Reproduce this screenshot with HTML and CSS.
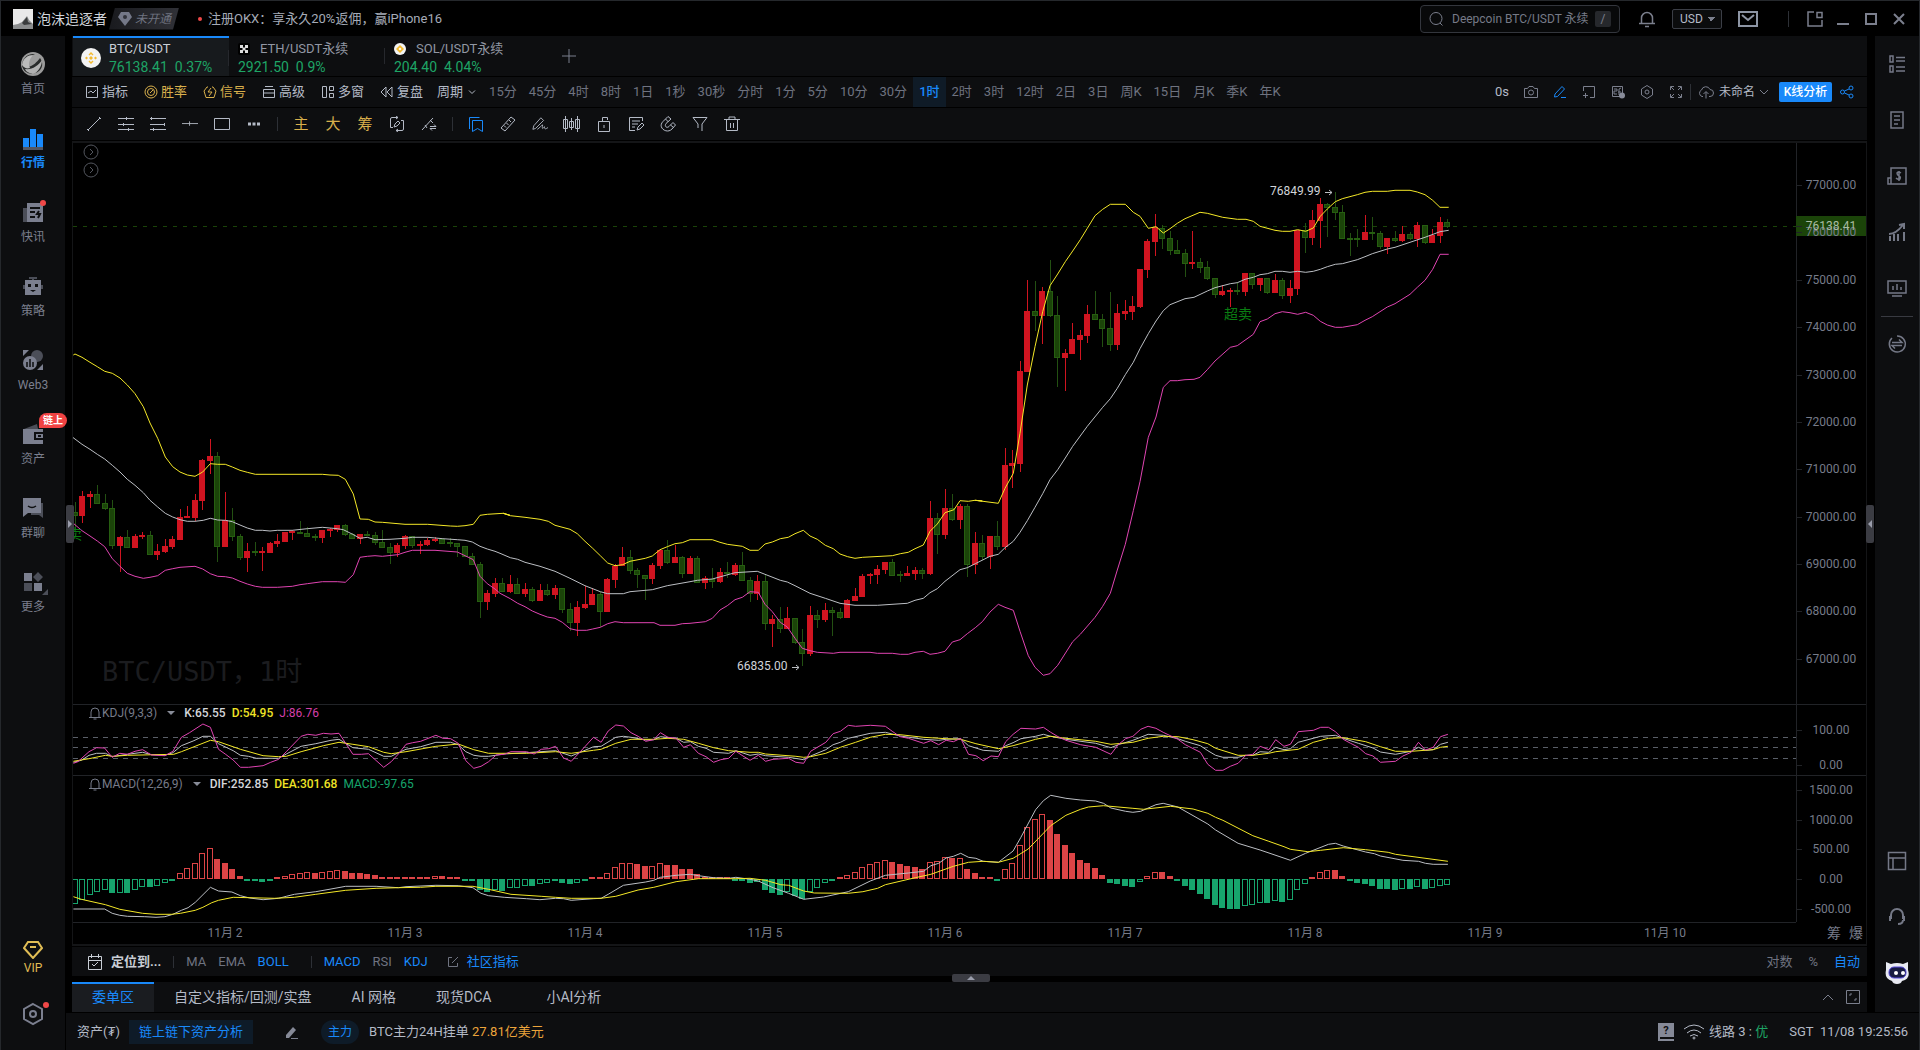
FILE: index.html
```html
<!DOCTYPE html>
<html lang="zh-CN">
<head>
  <meta charset="UTF-8" />
  <title>BTC/USDT</title>
  <link rel="stylesheet" href="styles.css">
</head>
<body>
  <header class="titlebar">
    <svg class="app-logo" viewBox="0 0 20 20"><rect width="20" height="20" fill="#e9e9e9"/><path d="M0 16l5-1 4-2 5-6 2 4 4 4v5H0z" fill="#8b8d8e"/><path d="M9 14l5-6 1 5 4 2-8 1z" fill="#3a3c3d"/></svg>
    <span class="app-name">泡沫追逐者</span>
    <span class="level"><svg width="16" height="16" viewBox="0 0 16 16"><path d="M4 1h8l3 5-7 9-7-9z" fill="#747888"/><circle cx="8" cy="6" r="2" fill="#30323a"/></svg><i>未开通</i></span>
    <a class="notice" href="#">注册OKX：享永久20%返佣，赢iPhone16</a>

    <div class="title-right">
      <label class="search">
        <svg width="16" height="16" viewBox="0 0 16 16"><circle cx="8" cy="7.500" r="6"/><path d="M12 12l2.500 2.500"/></svg>
        <input type="text" aria-label="搜索" placeholder="Deepcoin BTC/USDT 永续">
        <kbd>/</kbd>
      </label>
      <button class="icon-btn bell" aria-label="通知"><svg width="18" height="18" viewBox="0 0 18 18"><path d="M3.500 13V8a5.500 5.500 0 0 1 11 0v5M1 13.500h16M7 16.500h4" stroke-width="1.500"/></svg></button>
      <select class="currency" aria-label="计价货币"><option>USD</option></select>
      <button class="icon-btn mail" aria-label="消息"><svg width="20" height="16" viewBox="0 0 20 16"><path d="M1 1h18v14H1zM4 4l6 5 6-5" stroke-width="2"/></svg></button>
      <span class="sep"></span>
      <div class="window-btns">
        <button class="icon-btn" aria-label="分离"><svg width="16" height="16" viewBox="0 0 16 16"><path d="M7 1H1v14h14V9M10 1.500h5v5h-5z" stroke-width="1.500"/></svg></button>
        <button class="icon-btn" aria-label="最小化"><svg width="14" height="16" viewBox="0 0 14 16"><path d="M1 13h12" stroke-width="2"/></svg></button>
        <button class="icon-btn" aria-label="最大化"><svg width="14" height="14" viewBox="0 0 14 14"><path d="M2 2h10v10H2z" stroke-width="2"/></svg></button>
        <button class="icon-btn" aria-label="关闭"><svg width="14" height="14" viewBox="0 0 14 14"><path d="M2 2l10 10M12 2L2 12" stroke-width="2"/></svg></button>
      </div>
    </div>
  </header>

  <div class="layout">
    <nav class="side">
      <a href="#"><svg viewBox="0 0 24 24"><ellipse cx="12" cy="12" rx="12" ry="12" fill="#9b9b9b"/><path d="M1 14C1 7 6 1 14 2 8 4 5 9 7 15c5-1 9-5 12-9 4 5 2 11-1 13C12 24 3 22 1 14z" fill="#292b2b"/><path d="M1 13C2 6 7 3 12 3 8 8 7 12 9 16c-3 1-6 0-8-3z" fill="#bbb"/><path d="M4 17c7 1 13-3 17-9 0 7-5 13-9 14-4-1-7-2-8-5z" fill="#b2b2b2"/></svg>首页</a>
      <a href="#" class="active"><svg viewBox="0 0 24 24"><path d="M2 12h6v9H2zM9 3h6v18H9zM16 8h6v13h-6z" fill="#1989fa"/><path d="M2 21h20v3H2z" fill="#535763"/></svg>行情</a>
      <a href="#"><svg viewBox="0 0 24 24"><path d="M2 8h5v14H2z" fill="#4b4e58"/><path d="M6 3h16v19H6z" fill="#7b7f8f"/><path d="M9 8h10M9 12h5M9 17h5M18 11l-2 3h3l-2 4" stroke="#0e0f11" stroke-width="2" fill="none"/></svg><b class="dot"></b>快讯</a>
      <a href="#"><svg viewBox="0 0 24 24"><path d="M8 3h8v2H8zM11 4h2v3h-2zM2 11h20v4H2z" fill="#4b4e58"/><path d="M4 6h16v15H4z" fill="#7b7f8f"/><path d="M7 10h3v3H7zM14 10h3v3h-3zM9 16h6l-3 2z" fill="#0e0f11"/></svg>策略</a>
      <a href="#"><svg viewBox="0 0 24 24"><circle cx="16" cy="8" r="6" fill="#4b4e58"/><path d="M2 2h6L2 8zM22 22h-6l6-6z" fill="#7b7f8f"/><circle cx="9" cy="15" r="7" fill="#7b7f8f"/><path d="M6 14v5M9 11v8M12 14v5" stroke="#0e0f11" stroke-width="1.500"/></svg>Web3</a>
      <a href="#"><svg viewBox="0 0 24 24"><path d="M3 7l13-5 1 5z" fill="#4b4e58"/><path d="M2 7h20v15H2z" fill="#7b7f8f"/><path d="M22 11h-8v6h8M17 14h3" stroke="#0e0f11" stroke-width="2" fill="none"/></svg><em class="badge">链上</em>资产</a>
      <a href="#"><svg viewBox="0 0 24 24"><path d="M10 7h12v15l-4-3h-8z" fill="#4b4e58"/><path d="M2 2h18v15H7l-5 4z" fill="#7b7f8f"/><path d="M7 10q4 3 8 0" stroke="#0e0f11" stroke-width="1.500" fill="none"/></svg>群聊</a>
      <a href="#"><svg viewBox="0 0 24 24"><path d="M3 3h8v8H3zM13 13h8v8h-8z" fill="#7b7f8f"/><path d="M3 13h8v8H3zM17 2l5 5-5 5-5-5z" fill="#4b4e58"/></svg><b class="corner"></b>更多</a>
      <div class="side-bottom">
        <a href="#" class="vip"><svg viewBox="0 0 20 18"><path d="M5 1h10l4 6-9 10L1 7zM7 6h6" fill="none" stroke="#e0bd55" stroke-width="2"/></svg>VIP</a>
        <a href="#" class="gear" aria-label="设置"><svg viewBox="0 0 24 24"><path d="M12 2l9 5v10l-9 5-9-5V7z" fill="none" stroke="#7b7f8f" stroke-width="2"/><circle cx="12" cy="12" r="3" fill="none" stroke="#7b7f8f" stroke-width="2"/></svg><b class="dot"></b></a>
      </div>
    </nav>

    <div class="content">
      <div class="work">
        <main>
          <div class="symbols">
            <a href="#" class="symbol active">
              <svg width="20" height="20" viewBox="0 0 20 20"><circle cx="10" cy="10" r="10" fill="#f3f3f3"/><path d="M10 4l2.500 2.500-1 1L10 6 8.500 7.500l-1-1zM10 16l2.500-2.500-1-1L10 14l-1.500-1.500-1 1zM5.500 8.500L7 10l-1.500 1.500L4 10zM14.500 8.500L16 10l-1.500 1.500L13 10zM10 8l2 2-2 2-2-2z" fill="#f3ba2f"/></svg>
              <span><strong>BTC/USDT</strong><span class="price">76138.41&nbsp; 0.37%</span></span>
            </a>
            <a href="#" class="symbol">
              <span><strong><svg width="12" height="12" viewBox="0 0 12 12"><rect width="12" height="12" rx="2" fill="#000"/><path d="M2 2h3v3H2zM7 2h3v3H7zM2 7h3v3H2zM7 7h3v3H7zM4.500 4.500h3v3h-3z" fill="#ddd"/></svg>ETH/USDT永续</strong><span class="price">2921.50&nbsp; 0.9%</span></span>
            </a>
            <a href="#" class="symbol">
              <span><strong><svg width="12" height="12" viewBox="0 0 12 12"><circle cx="6" cy="6" r="6" fill="#f3f3f3"/><path d="M6 2l4 4-4 4-4-4z" fill="#f3ba2f"/><path d="M6 4.500L7.500 6 6 7.500 4.500 6z" fill="#fff"/></svg>SOL/USDT永续</strong><span class="price">204.40&nbsp; 4.04%</span></span>
            </a>
            <button class="icon-btn add" aria-label="添加"><svg width="14" height="14" viewBox="0 0 14 14"><path d="M7 0v14M0 7h14"/></svg></button>
          </div>

          <div class="toolbar">
            <div class="tools">
              <button><svg viewBox="0 0 14 14"><path d="M1.500 1.500h11v11h-11zM3 8l3-2 2 2 3-3"/></svg>指标</button>
              <button class="gold"><svg viewBox="0 0 14 14"><circle cx="7" cy="7" r="6"/><circle cx="7" cy="7" r="3.500"/><path d="M6 8l3-3"/></svg>胜率</button>
              <button class="gold"><svg viewBox="0 0 14 14"><path d="M5 2H4L1 6l2 6.500h8L13 6l-3-4H9M8 3L5 7h4l-3 4"/></svg>信号</button>
              <button><svg viewBox="0 0 14 14"><path d="M3 1.500h8M1.500 4.500h11v8h-11zM1.500 8h11"/></svg>高级</button>
              <button><svg viewBox="0 0 14 14"><path d="M1.500 1.500h4v11h-4zM8.500 1.500h4v4h-4zM8.500 8.500h4v4h-4z"/></svg>多窗</button>
              <button><svg viewBox="0 0 14 14"><path d="M6 2v10L1 7zM12 2v10L7 7z"/></svg>复盘</button>
            </div>
            <button class="period">周期<svg width="8" height="8" viewBox="0 0 8 8"><path d="M1 2.500l3 3 3-3"/></svg></button>
            <div class="times">
              <button>15分</button><button>45分</button><button>4时</button><button>8时</button><button>1日</button><button>1秒</button><button>30秒</button><button>分时</button><button>1分</button><button>5分</button><button>10分</button><button>30分</button><button class="active">1时</button><button>2时</button><button>3时</button><button>12时</button><button>2日</button><button>3日</button><button>周K</button><button>15日</button><button>月K</button><button>季K</button><button>年K</button>
            </div>
            <div class="toolbar-right">
              <span class="delay">0s</span>
              <button class="icon-btn" aria-label="截图"><svg viewBox="0 0 14 14"><path d="M.500 3.500h3L5 1.500h4l1.500 2h3v9H.500z"/><circle cx="7" cy="7.500" r="2.500"/></svg></button>
              <button class="icon-btn blue" aria-label="画笔"><svg viewBox="0 0 14 14"><path d="M1.500 12l.5-3 7-7.500 2.500 2.500-7 7.500zM8 12.500h5"/></svg></button>
              <button class="icon-btn" aria-label="选区"><svg viewBox="0 0 14 14"><path d="M1.500 6V1.500h11v11H8M3.500 8v5M1 10.500h5"/></svg></button>
              <button class="icon-btn" aria-label="弹幕"><svg viewBox="0 0 14 14"><path d="M1.500 1.500h10v10h-10zM3 4h3v2H3v3h3M8 4v6M7 7h3M8 4l2-1"/><circle cx="11" cy="10.500" r="3" fill="#888c9a"/></svg></button>
              <button class="icon-btn" aria-label="设置"><svg viewBox="0 0 14 14"><path d="M7 .500L12.500 4v6L7 13.500 1.500 10V4z"/><circle cx="7" cy="7" r="2"/></svg></button>
              <button class="icon-btn" aria-label="全屏"><svg viewBox="0 0 14 14"><path d="M1.500 5V1.500H5M9 1.500h3.500V5M12.500 9v3.500H9M5 12.500H1.500V9M2 2l3 3M12 2L9 5M12 12L9 9M2 12l3-3"/></svg></button>
              <span class="sep"></span>
              <button class="layout-name"><svg width="16" height="14" viewBox="0 0 16 14"><path d="M5 11.500H4A3.500 3.500 0 0 1 3.500 5 4.500 4.500 0 0 1 12 4.500a3.500 3.500 0 0 1 0 7h-1M8 13.500V7M5.500 9L8 6.500 10.500 9"/></svg>未命名<svg width="8" height="8" viewBox="0 0 8 8"><path d="M0 2l4 4 4-4"/></svg></button>
              <button class="primary">K线分析</button>
              <button class="icon-btn blue" aria-label="分享"><svg viewBox="0 0 14 14"><circle cx="2.500" cy="7" r="2"/><circle cx="11" cy="3" r="2"/><circle cx="11" cy="11" r="2"/><path d="M4.500 6L9 4M4.500 8L9 10"/></svg></button>
            </div>
          </div>

          <div class="drawbar">
            <button aria-label="线段"><svg viewBox="0 0 16 16"><path d="M2 14L14 2M1 13l2 2M13 1l2 2"/></svg></button>
            <button aria-label="平行线"><svg viewBox="0 0 16 16"><path d="M0 2.500h16M0 8.500h16M0 13.500h16M8.500 1v3M5.500 7v3M10.500 12v3"/></svg></button>
            <button aria-label="通道"><svg viewBox="0 0 16 16"><path d="M0 2.500h16M0 8.500h14M0 13.500h16M1.500 1v3M14.500 7v3M3.500 12v3"/></svg></button>
            <button aria-label="水平线"><svg viewBox="0 0 18 16"><path d="M0 7.500h18M8.500 5v5"/></svg></button>
            <button aria-label="矩形"><svg viewBox="0 0 16 16"><path d="M.500 2.500h15v11H.500z"/></svg></button>
            <button aria-label="更多"><svg viewBox="0 0 16 16"><path d="M2 8h3M6.500 8h3M11 8h3" stroke-width="3"/></svg></button>
            <span class="sep"></span>
            <button class="gold">主</button>
            <button class="gold">大</button>
            <button class="gold">筹</button>
            <button aria-label="自动画线"><svg viewBox="0 0 16 16"><path d="M9 1.500H3Q1.500 1.500 1.500 3v8.500H4M7 14.500h6q1.500 0 1.500-1.500V4.500H12M7 0l2 1.500L7 3M9 13l-2 1.500L9 16M5 11l1-3 3-3 2 2-3 3z"/></svg></button>
            <button aria-label="画线转换"><svg viewBox="0 0 16 16"><path d="M1 14L12 2M4 9l2 3M9 4l3 3M9 10.500h6l-2-2M15 12.500H9l2 2"/></svg></button>
            <span class="sep"></span>
            <button class="blue" aria-label="收藏"><svg viewBox="0 0 16 16"><path d="M1.500 13V1.500h10M4.500 4.500h10v11l-5-3-5 3z"/></svg></button>
            <button aria-label="测量"><svg viewBox="0 0 16 16"><path d="M1 12L11 1l4 3L5 15zM9 4l2 2M6.500 7l2 2M4 9.500l2 2"/></svg></button>
            <button aria-label="手绘"><svg viewBox="0 0 18 16"><path d="M1 14l1-4 8-9 3 3-9 9zM6 14c3-2 4-4 6-5-1 5 0 5 2 2 0 3 1 3 4 1"/></svg></button>
            <button class="wide" aria-label="K线形态"><svg viewBox="0 0 18 16"><path d="M2.500 0v16M.500 3.500h4v9h-4zM8.500 2v12M6.500 5.500h4v6h-4zM14.500 0v16M12.500 3.500h4v9h-4z"/></svg></button>
            <button aria-label="锁定"><svg viewBox="0 0 16 16"><path d="M2.500 5.500h11v10h-11zM6.500 5V1.500h5V4M8 9v3"/></svg></button>
            <button aria-label="笔记"><svg viewBox="0 0 16 16"><path d="M14.500 5V1.500h-13v13H7M4 5h8M4 8h6M4 11h3M9 14l1-3 4-4 2 2-4 4z"/></svg></button>
            <button aria-label="磁吸"><svg viewBox="0 0 16 16"><path d="M8 .5L3 5.500c-6 6 4 13 9 7.500l3.500-4-2.500-2.500-4 4c-2 2-5 0-3-3l5-4.500zM5.500 3l3 3M10.500 9l3 2.500"/></svg></button>
            <button aria-label="筛选"><svg viewBox="0 0 16 16"><path d="M1 1.500h14L10 8v7M1 1.500L6 8v4"/></svg></button>
            <button aria-label="删除"><svg viewBox="0 0 16 16"><path d="M0 3.500h16M5 3V1h6v2M2.500 4v10.500h11V4M6.500 7v5M9.500 7v5"/></svg></button>
          </div>

          <section class="chart">
            <svg id="plot" class="plot"></svg>
            <svg id="axis" class="axis"></svg>
            <svg id="timeline" class="timeline"></svg>
            <div class="axis-modes"><button>筹</button><button>爆</button></div>
            <div class="expanders">
              <button aria-label="展开一"><svg width="16" height="16" viewBox="0 0 16 16"><circle cx="8" cy="8" r="7"/><path d="M7 5l3 3-3 3"/></svg></button>
              <button aria-label="展开二"><svg width="16" height="16" viewBox="0 0 16 16"><circle cx="8" cy="8" r="7"/><path d="M7 5l3 3-3 3"/></svg></button>
            </div>
            <div class="legend kdj">
              <svg width="14" height="14" viewBox="0 0 14 14"><path d="M3 11V6a4 4 0 0 1 8 0v5M1 11.500h12M5.500 13h3"/></svg><span>KDJ(9,3,3)</span><b class="arrow"></b>
              <strong>K:65.55</strong><strong class="yellow">D:54.95</strong><span class="pink">J:86.76</span>
            </div>
            <div class="legend macd">
              <svg width="14" height="14" viewBox="0 0 14 14"><path d="M3 11V6a4 4 0 0 1 8 0v5M1 11.500h12M5.500 13h3"/></svg><span>MACD(12,26,9)</span><b class="arrow"></b>
              <strong>DIF:252.85</strong><strong class="yellow">DEA:301.68</strong><span class="green">MACD:-97.65</span>
            </div>
            <button class="handle left" aria-label="展开左栏"></button>
            <button class="handle right" aria-label="展开右栏"></button>
          </section>

          <div class="indicators">
            <button class="locate"><svg width="14" height="16" viewBox="0 0 14 16"><path d="M.500 2.500h13v13H.500zM.500 6.500h13M3.500 0v4M10.500 0v4M4 10l2 2 4-4"/></svg>定位到...</button>
            <span class="sep"></span>
            <button>MA</button><button>EMA</button><button class="blue">BOLL</button>
            <span class="sep wide"></span>
            <button class="blue">MACD</button><button>RSI</button><button class="blue">KDJ</button>
            <a href="#" class="community"><svg width="12" height="12" viewBox="0 0 12 12"><path d="M5 1.500H1.500v9h9V7M5 7l6-6"/></svg>社区指标</a>
            <div class="scale"><button>对数</button><button>%</button><button class="blue">自动</button></div>
            <button class="drag" aria-label="展开底栏"></button>
          </div>

          <div class="panels">
            <button class="active">委单区</button><button>自定义指标/回测/实盘</button><button>AI 网格</button><button>现货DCA</button><button class="last">小AI分析</button>
            <div class="panel-tools">
              <button class="icon-btn" aria-label="收起"><svg width="12" height="8" viewBox="0 0 12 8"><path d="M1 7l5-5 5 5"/></svg></button>
              <button class="icon-btn" aria-label="最大化面板"><svg width="14" height="14" viewBox="0 0 14 14"><path d="M.500.500h13v13H.500zM4 6V4h2M10 8v2H8"/></svg></button>
            </div>
          </div>
        </main>

        <aside class="rail">
          <a href="#" aria-label="自选"><svg viewBox="0 0 20 20"><path d="M3 2h3v6H3zM3 12h3v6H3zM9 3.500h9M9 7h9M9 13h9M9 17h9" stroke-width="1.500"/></svg></a>
          <a href="#" aria-label="资讯"><svg viewBox="0 0 20 20"><path d="M4 2h12v16H4zM7 6h6M7 10h6M7 14h4" stroke-width="1.500"/></svg></a>
          <a href="#" aria-label="交易"><svg viewBox="0 0 20 20"><path d="M4 2h15v16H4zM4 12H1v6h4M14 7q-3-2-4 0 0 2 2 3 2 1 1 3-2 1-4-1M12 5v10" stroke-width="1.500"/></svg></a>
          <a href="#" aria-label="数据"><svg viewBox="0 0 20 20"><path d="M3 14v5M7 12v7M11 12v7M17 10v9M2 12c6 0 10-4 14-9M12 3l5-1v5"/></svg></a>
          <a href="#" aria-label="看板"><svg viewBox="0 0 20 20"><path d="M1 3h18v12H1zM6 8v4M10 6v6M14 9v3M5 18h10" stroke-width="1.500"/></svg></a>
          <hr>
          <a href="#" aria-label="兑换"><svg viewBox="0 0 20 20"><path d="M5 4a8 8 0 1 0 5-2M5 8.500h10l-3-3M15 11.500H5l3 3" stroke-width="1.500"/></svg></a>
          <div class="rail-bottom">
            <a href="#" aria-label="布局"><svg viewBox="0 0 20 20"><path d="M1.500 1.500h17v17h-17zM2 7h17M6 7v12" stroke-width="1.500"/></svg></a>
            <a href="#" aria-label="客服"><svg viewBox="0 0 20 20"><path d="M4 12V8a6 6 0 0 1 12 0v4M3 9v5M17 9v5M16 13c0 3-2 4-5 4"/></svg></a>
            <a href="#" aria-label="助手"><svg viewBox="0 0 24 24"><path d="M1 1l5 2q6-2 12 0l5-2v8q3 9-6 11-1 3-5 3t-5-3Q-1 18 1 9z" fill="#e8eaf2"/><rect x="4" y="6" width="17" height="11" rx="5" fill="#171b42" stroke="#564bd8" stroke-width="1"/><circle cx="11" cy="12" r="2" fill="#fff"/><circle cx="18" cy="12" r="2" fill="#fff"/></svg></a>
          </div>
        </aside>
      </div>

      <footer class="status">
        <span>资产(₮)</span>
        <a href="#" class="chip">链上链下资产分析</a>
        <button class="icon-btn edit" aria-label="编辑"><svg width="14" height="16" viewBox="0 0 14 16"><path d="M1 11l7-8 3 3-7 8H1z" fill="#858997"/><path d="M6 14.500h7"/></svg></button>
        <span class="pill">主力</span>
        <span class="orders">BTC主力24H挂单 <b>27.81亿美元</b></span>
        <div class="status-right">
          <svg width="16" height="18" viewBox="0 0 16 18"><path d="M0 0h16v14H2v2h14v2H0z" fill="#858997"/><text x="8" y="11" text-anchor="middle" class="help">?</text></svg>
          <svg class="wifi" width="20" height="16" viewBox="0 0 20 16"><path d="M0 5q10-8 20 0M3 9q7-6 14 0M6 12q4-3 8 0"/><circle cx="10" cy="14" r="1"/></svg>
          <span>线路 3 : <b class="ok">优</b></span>
          <time>SGT&nbsp; 11/08 19:25:56</time>
        </div>
      </footer>
    </div>
  </div>

  <script src="script.js"></script>
</body>
</html>
```
FILE: styles.css
```css
* {
  box-sizing: border-box;
}

body {
  margin: 0;
  min-height: 100vh;
  display: flex;
  flex-direction: column;
  background: #000;
  border: 1px solid #25282c;
  border-width: 1px 1px 0;
  color: #b4bac6;
  font: 13px/18px Roboto, "Noto Sans CJK SC", sans-serif;
}

a {
  color: inherit;
  text-decoration: none;
}

button {
  padding: 0;
  border: 0;
  background: none;
  color: inherit;
  font: inherit;
  white-space: nowrap;
}

svg {
  flex-shrink: 0;
  fill: none;
  stroke: currentColor;
}

svg [fill]:not([stroke]) {
  stroke: none;
}

.icon-btn {
  display: flex;
  align-items: center;
  justify-content: center;
  color: #7b7f8d;
}

.blue,
.icon-btn.blue {
  color: #1989fa;
}

.gold {
  color: #d9b04c;
}

.sep {
  width: 1px;
  height: 16px;
  background: #2d3036;
}

/* title bar */
.titlebar {
  height: 35px;
  padding: 0 12px;
  display: flex;
  align-items: center;
}

.app-logo {
  width: 20px;
  height: 20px;
}

.app-name {
  margin-left: 4px;
  font-size: 14px;
  color: #d0d4da;
}

.level {
  width: 70px;
  height: 22px;
  margin-left: 2px;
  display: flex;
  align-items: center;
  gap: 2px;
  padding-left: 8px;
  background: linear-gradient(90deg, #191a1e, #303137);
  clip-path: polygon(6px 0, 100% 0, 64px 100%, 0 100%);
  color: #6f7380;
  font-size: 12px;
}

.notice {
  position: relative;
  margin-left: 29px;
  color: #a5abb7;
}

.notice::before {
  content: "";
  position: absolute;
  left: -10px;
  top: 7px;
  width: 4px;
  height: 4px;
  border-radius: 50%;
  background: #f04848;
}

.title-right {
  margin-left: auto;
  display: flex;
  align-items: center;
}

.search {
  width: 200px;
  height: 28px;
  padding: 0 7px;
  display: flex;
  align-items: center;
  gap: 8px;
  border: 1px solid #33363d;
  border-radius: 4px;
  background: #08090a;
  color: #7b7f8d;
}

.search input {
  width: 139px;
  padding: 0;
  border: 0;
  outline: 0;
  background: none;
  color: inherit;
  font: 12px/18px Roboto, "Noto Sans CJK SC", sans-serif;
}

.search input::placeholder {
  color: #767a87;
}

.search kbd {
  flex-shrink: 0;
  width: 16px;
  height: 16px;
  margin-left: -4px;
  border-radius: 2px;
  background: #26282c;
  text-align: center;
  font: 12px/16px Roboto, sans-serif;
}

.bell {
  margin: 0 16px 0 18px;
}

.currency {
  width: 50px;
  height: 20px;
  padding: 0 7px;
  appearance: none;
  border: 1px solid #3b3e46;
  border-radius: 2px;
  background-color: #0b0c0d;
  background-image: conic-gradient(from -45deg at 50% 100%, #7b7f8d 90deg, transparent 0);
  background-size: 8px 4px;
  background-position: 34px 7px;
  background-repeat: no-repeat;
  color: #b4bac6;
  font: 12px/16px Roboto, sans-serif;
}

.mail {
  margin: 0 30px 0 16px;
  color: #8d95a4;
}

.window-btns {
  display: flex;
  gap: 12px;
  margin-left: 18px;
}

.window-btns .icon-btn {
  width: 16px;
}

/* side nav */
.layout {
  flex: 1;
  display: flex;
}

.side {
  width: 64px;
  margin-right: 1px;
  padding: 16px 0 2px;
  display: flex;
  flex-direction: column;
  gap: 28px;
  background: #0d0e10;
}

.side a {
  position: relative;
  height: 46px;
  display: flex;
  flex-direction: column;
  align-items: center;
  gap: 4px;
  color: #7b7f8d;
  font-size: 12px;
}

.side svg {
  width: 24px;
  height: 24px;
}

.side a.active {
  color: #1989fa;
  font-weight: bold;
}

.dot {
  position: absolute;
  left: 39px;
  top: 0;
  width: 6px;
  height: 6px;
  border-radius: 50%;
  background: #f04848;
}

.gear .dot {
  left: 42px;
}

.corner {
  position: absolute;
  left: 41px;
  top: 19px;
  border: 3px solid #4b4e58;
  border-top-color: transparent;
  border-left-color: transparent;
}

.badge {
  position: absolute;
  left: 38px;
  top: -9px;
  z-index: 3;
  width: 28px;
  border-radius: 8px 8px 8px 0;
  background: #f04343;
  color: #fff;
  font: bold 10px/15px Roboto, "Noto Sans CJK SC", sans-serif;
  text-align: center;
}

.side-bottom {
  margin-top: auto;
}

.side .vip {
  gap: 0;
  height: 61px;
  color: #e0bd55;
}

.side .vip svg {
  width: 20px;
  height: 18px;
}

/* main column */
.content {
  flex: 1;
  min-width: 0;
  display: flex;
  flex-direction: column;
  gap: 1px;
}

.work {
  flex: 1;
  display: flex;
  gap: 8px;
  padding-left: 6px;
}

main {
  flex: 1;
  min-width: 0;
  display: flex;
  flex-direction: column;
  gap: 1px;
}

.symbols,
.toolbar,
.drawbar,
.indicators,
.panels {
  display: flex;
  align-items: center;
  background: #0d0e10;
}

.symbols {
  height: 40px;
  padding-left: 1px;
}

.symbol {
  position: relative;
  width: 156px;
  height: 40px;
  padding: 4px 0 0 9px;
  display: flex;
  align-items: center;
  gap: 8px;
  color: #9297a3;
}

.symbol::after {
  content: "";
  position: absolute;
  right: 0;
  top: 12px;
  width: 1px;
  height: 16px;
  background: #26282d;
}

.symbol:nth-child(3)::after {
  display: none;
}

.symbol.active {
  padding: 2px 0 0 8px;
  border-top: 2px solid #1989fa;
  background: #171a1d;
  color: #c9ced6;
}

.symbol strong {
  display: flex;
  align-items: center;
  gap: 10px;
  font-weight: normal;
}

.price {
  display: block;
  color: #1ea566;
  font-size: 14px;
}

.add {
  margin-left: 21px;
}

.toolbar {
  height: 30px;
  padding-left: 13px;
}

.tools {
  display: flex;
  gap: 16px;
}

.tools button {
  display: flex;
  align-items: center;
  gap: 3px;
}

.tools svg,
.toolbar-right .icon-btn svg {
  width: 14px;
  height: 14px;
}

.period {
  margin: 0 7px 0 14px;
  display: flex;
  align-items: center;
  gap: 5px;
}

.times {
  display: flex;
}

.times button {
  height: 30px;
  padding: 0 6px;
  color: #6f7380;
}

.times .active {
  background: #0f1b27;
  color: #1989fa;
  font-weight: 500;
}

.toolbar-right {
  margin-left: auto;
  padding-right: 13px;
  display: flex;
  align-items: center;
  gap: 15px;
}

.toolbar-right .sep {
  margin: 0 -8px;
}

.layout-name {
  display: flex;
  align-items: center;
  gap: 5px;
  font-size: 12px;
}

.layout-name svg {
  color: #7b7f8d;
}

.primary {
  width: 53px;
  height: 20px;
  margin-right: -7px;
  margin-left: -4px;
  border-radius: 2px;
  background: #1989fa;
  color: #fff;
  font-size: 12px;
  font-weight: 500;
}

.drawbar {
  height: 32px;
  padding-left: 6px;
}

.drawbar button {
  width: 32px;
  height: 32px;
  display: flex;
  align-items: center;
  justify-content: center;
}

.drawbar button svg {
  width: 16px;
  height: 16px;
}

.drawbar .wide svg {
  width: 18px;
}

.drawbar .gold {
  font-size: 15px;
}

.drawbar .sep {
  height: 14px;
  margin: 0 7px;
}

/* chart */
.chart {
  position: relative;
  flex: 1;
  display: grid;
  grid-template-columns: 1fr 70px;
  grid-template-rows: 779px 1fr;
  border: 1px solid #141517;
  border-width: 2px 1px;
}

.plot,
.axis,
.timeline {
  width: 100%;
  height: 100%;
  stroke: none;
  font-size: 12px;
}

.axis text,
.timeline text {
  fill: #767b89;
}

.timeline,
.axis-modes {
  height: 22px;
}

.axis-modes {
  display: flex;
  align-items: center;
  justify-content: flex-end;
  gap: 8px;
  padding-right: 3px;
  color: #767b89;
  font-size: 14px;
}

.grid-line {
  stroke: #212327;
}

.ref-line {
  stroke: #5a5f68;
  stroke-dasharray: 5 5;
}

.last-line {
  stroke: #1b4409;
  stroke-dasharray: 4 6;
}

.up {
  fill: #d01420;
}

.down {
  fill: #1b4409;
  stroke: #265e10;
}

.wick-up {
  stroke: #d01420;
}

.wick-down {
  stroke: #235012;
}

.line-upper {
  stroke: #f4e827;
}

.line-mid {
  stroke: #bcbfc4;
}

.line-lower {
  stroke: #e044b2;
}

.bar-up {
  fill: #dc4446;
  stroke: #dc4446;
}

.bar-down {
  fill: #17a56d;
  stroke: #17a56d;
}

.hollow {
  fill: #000;
}

.mark {
  fill: #d0d3d8;
}

.signal {
  fill: #0a7d12;
  font-size: 14px;
}

.watermark {
  fill: #1b1c1f;
  font: 27px "DejaVu Sans Mono", "Noto Sans CJK SC", monospace;
}

.axis .tag-text {
  fill: #a9bba2;
}

.expanders {
  position: absolute;
  left: 10px;
  top: 1px;
  display: flex;
  flex-direction: column;
  gap: 2px;
  color: #53565e;
}

.expanders button,
.expanders svg {
  display: block;
}

.legend {
  position: absolute;
  left: 15px;
  display: flex;
  align-items: center;
  color: #767b89;
  font-size: 12px;
}

.legend strong {
  margin-right: 6px;
  color: #d4d7db;
  font-weight: 500;
}

.legend .yellow {
  color: #efe326;
}

.legend .pink {
  color: #d43fa9;
}

.legend .green {
  color: #17a56d;
}

.kdj {
  top: 561px;
}

.macd {
  top: 632px;
}

.arrow {
  margin: 4px 9px 0 10px;
  border: 4px solid transparent;
  border-top-color: #888c98;
}

.handle {
  position: absolute;
  top: 362px;
  width: 8px;
  height: 38px;
  border-radius: 2px;
  background: #3b3c43;
}

.handle::after {
  content: "";
  position: absolute;
  top: 15px;
  border: 4px solid transparent;
}

.handle.left {
  left: -7px;
}

.handle.left::after {
  left: 2px;
  border-left-color: #9a9dab;
}

.handle.right {
  right: -8px;
}

.handle.right::after {
  right: 2px;
  border-right-color: #9a9dab;
}

/* bars under the chart */
.indicators {
  position: relative;
  height: 29px;
  margin-bottom: 5px;
  padding: 0 7px 0 16px;
  gap: 12px;
  color: #6f7380;
}

.locate {
  display: flex;
  align-items: center;
  gap: 9px;
  color: #c9ced6;
  font-weight: bold;
}

.indicators .sep {
  height: 12px;
}

.indicators .wide {
  margin-left: 10px;
}

.community {
  margin-left: 7px;
  display: flex;
  align-items: center;
  gap: 8px;
  color: #1989fa;
}

.community svg {
  color: #6f7380;
}

.scale {
  margin-left: auto;
  display: flex;
  gap: 16px;
}

.drag {
  position: absolute;
  left: 49%;
  bottom: -6px;
  width: 38px;
  height: 8px;
  border-radius: 2px;
  background: #3b3c43;
}

.drag::after {
  content: "";
  position: absolute;
  left: 15px;
  top: -2px;
  border: 4px solid transparent;
  border-bottom-color: #9a9dab;
}

.panels {
  height: 30px;
  font-size: 14px;
}

.panels > button {
  height: 30px;
  padding: 0 20px;
}

.panels > .active {
  padding-bottom: 2px;
  border-top: 2px solid #1989fa;
  background: #1a1c20;
  color: #1989fa;
}

.panels > .last {
  margin-left: 15px;
}

.panel-tools {
  margin-left: auto;
  padding-right: 7px;
  display: flex;
  gap: 12px;
}

/* right rail */
.rail {
  width: 44px;
  padding: 17px 0 28px;
  display: flex;
  flex-direction: column;
  align-items: center;
  gap: 34px;
  background: #0d0e10;
  color: #747886;
}

.rail a,
.rail svg {
  display: block;
  width: 22px;
  height: 22px;
}

.rail svg {
  width: 20px;
  height: 20px;
  margin: 1px;
  stroke-width: 2;
}

.rail hr {
  width: 32px;
  margin: -17px 0 -18px;
  border: 0;
  border-top: 1px solid #383a41;
}

.rail-bottom {
  margin-top: auto;
  display: flex;
  flex-direction: column;
  gap: 34px;
}

.rail-bottom a:last-child svg {
  width: 24px;
  height: 24px;
  margin: -1px;
}

/* status bar */
.status {
  height: 37px;
  padding: 0 11px;
  display: flex;
  align-items: center;
  background: #0d0e10;
}

.chip {
  margin-left: 9px;
  padding: 3px 10px;
  background: #0e1b28;
  color: #1989fa;
}

.edit {
  margin: 0 22px 0 32px;
}

.pill {
  margin-right: 10px;
  padding: 3px 7px;
  border-radius: 12px;
  background: #0e1b28;
  color: #1989fa;
  font-size: 12px;
}

.orders b {
  color: #eca43b;
  font-weight: normal;
}

.status-right {
  margin-left: auto;
  display: flex;
  align-items: center;
}

.help {
  fill: #0d0e10;
  stroke: none;
  font: bold 11px Roboto, sans-serif;
}

.wifi {
  margin: 0 5px 0 10px;
}

.ok {
  color: #1ea566;
  font-weight: normal;
}

.status time {
  margin-left: 21px;
}
```
FILE: script.js
```js
const NS = 'http://www.w3.org/2000/svg';
const plot = document.getElementById('plot');
const axis = document.getElementById('axis');
const timeline = document.getElementById('timeline');

function add(parent, tag, attrs, text) {
  const el = document.createElementNS(NS, tag);
  for (const key in attrs) el.setAttribute(key, attrs[key]);
  if (text) el.textContent = text;
  parent.appendChild(el);
}

// Candles: colour, high, body top, body bottom, low (1/3 px below the segment top)
const candles = [
  { top: 187, rows: 'G517,547,557,600 R483,498,558,580 R483,492,500,535 G466,492,521,521 G492,519,536,539 G509,534,647,656 R617,621,647,726 G600,621,653,653 R613,618,653,653 R606,615,620,627 G603,615,674,674 R642,663,674,690 R627,648,665,668 R619,627,651,656 R538,561,629,629 R528,558,563,563 R492,510,563,573 R388,390,513,540 R327,378,392,431 G366,378,650,695 R486,571,651,651 G534,570,620,634 G612,618,683,691 R639,663,683,727 G636,663,668,677 R652,663,668,723 R637,639,669,669 R613,633,641,650 R605,606,635,635 R600,602,608,629 G573,605,611,611 G590,609,620,622 G612,618,622,634 R599,600,623,639 R594,596,602,620 R585,586,599,605 G583,586,614,619 G609,613,626,627 R612,612,626,641 G603,612,617,617 G606,615,638,645 G601,636,653,654 G640,652,668,702 R639,645,668,682 R615,618,647,656 G618,618,647,654 R633,642,647,671 R624,629,645,647 R622,627,633,636 G624,626,641,641 G625,636,640,650 G639,640,650,681 G647,648,680,681 G670,678,704,705 G697,702,815,863 R780,789,815,841 R744,759,791,800 G745,759,785,786 R735,762,785,788 G743,762,791,792' },
  { top: 317, rows: 'R369,387,402,410 G380,387,422,426 R372,390,422,422 G371,390,404,408 R375,384,404,416 G383,384,449,458 G428,447,488,512 R423,441,488,527 R377,432,443,446 R384,402,434,434 G395,402,455,502 R355,357,455,455 R313,317,359,383 R261,291,317,317 G270,291,332,341 G324,330,346,384 G345,346,356,420 R308,315,357,373 R266,269,318,327 G240,270,308,311 R255,291,308,308 G287,291,341,354 R289,294,342,342 G287,294,368,369 R347,354,368,387 G323,356,365,384 R324,336,365,369 G306,336,342,353 R309,315,345,347 G275,315,362,362 G351,360,401,425 R346,363,401,420 G345,363,491,509 R464,477,491,561 G441,477,506,519 R440,474,506,507 G474,474,548,551 G508,546,581,619 R438,465,581,588 G451,465,479,504 R429,450,479,485 G441,450,458,527 G445,457,473,477 R418,420,473,473 R383,408,422,423 R341,348,410,410 R339,342,349,372 R315,327,345,372 R305,306,329,342 G297,306,347,347 G333,342,347,366 R318,339,347,347 R320,330,341,359 G324,331,341,356 R123,174,342,345 G160,174,224,281 R87,144,224,236 G102,144,179,184 R132,138,179,207 G132,138,314,350 R217,249,314,342 G225,249,290,300 R227,228,290,327 G184,228,260,270' },
  { top: 27, rows: 'R833,885,1130,1139 R839,879,887,953 R573,603,881,905 R329,423,605,606 G333,424,437,484 R351,363,437,522 G271,363,437,442 G378,435,563,652 R538,549,563,662 R460,507,551,551 R480,495,510,570 R404,432,497,519 G363,432,449,449 G433,447,476,530 G367,474,524,544 R401,429,524,540 R390,423,431,450 R377,408,426,449 R297,297,410,413 R208,213,299,324 R131,170,215,257 G165,174,206,236 G183,204,242,255 G210,240,251,251 G237,249,281,321 R184,276,281,296 G264,276,293,308 G273,291,326,329 G324,324,374,383 R345,363,375,377 R354,360,365,410 G337,360,365,375 R308,309,365,377 G309,309,344,356 R323,324,344,362 G324,324,368,373 R312,330,368,369 G324,330,377,386 R330,354,377,399 R180,180,356,375 G160,180,203,249 R121,150,203,224 R84,102,153,234 G98,102,113,200 G67,111,128,150 G106,126,206,206 G189,204,209,259 G176,204,209,230 R136,186,209,209 G141,186,191,210 G183,189,230,236 R203,204,231,251 G183,204,212,215 R168,192,212,215 G186,192,207,210 R156,165,207,231 G165,165,218,221 R178,194,218,218 R141,156,198,218 G147,156,170,173' }
];

const macd = [-76,-64,-48,-39,-33,-43,-42,-43,-34,-25,-25,-22,-13,-4,18,33,48,78,93,60,48,30,9,-4,-7,-10,-4,4,9,14,18,20,19,20,23,26,24,18,18,15,12,5,3,3,5,5,5,5,9,8,5,5,-4,-7,-32,-38,-34,-37,-28,-27,-22,-22,-16,-13,-4,-11,-16,-13,-7,4,5,18,36,48,49,45,39,40,48,42,42,30,30,15,5,3,3,3,-3,-5,-13,-9,-32,-41,-47,-40,-52,-60,-38,-28,-13,-4,4,12,21,36,45,51,57,51,45,39,36,30,51,54,66,63,64,30,18,6,6,-7,30,48,102,156,180,195,177,135,102,78,57,48,33,12,-13,-16,-22,-25,-10,9,21,21,9,-4,-22,-34,-46,-61,-79,-88,-91,-91,-82,-79,-73,-73,-67,-70,-64,-34,-16,5,21,27,27,9,-4,-13,-16,-22,-31,-31,-34,-31,-31,-25,-31,-28,-22,-18];

// Line segments: [left, top, horizontal scale, points]
const lines = {
  'line-upper': [
    [-13, 187, 3, '40,75 45,72 66,82 90,97 112,110 134,124 157,130 180,144 202,165 225,191 250,230 270,279 293,325 316,381 338,410 360,426 382,435 405,439 428,426 451,401 473,403 496,403 517,411 540,421 562,427 586,433 787,433 810,435 835,436 856,448 880,492 900,567 925,568 945,576 967,577 1035,583 1103,583 1171,588 1192,589 1215,587 1240,583 1260,556 1282,553 1330,550 1350,556'],
    [427, 317, 3, '10,160 31,167 75,172 120,178 145,184 165,196 210,208 232,221 255,244 278,265 301,287 323,309 345,317 368,314 390,304 436,295 457,288 480,269 502,260 525,251 547,248 570,239 637,239 660,247 682,253 727,259 750,271 775,271 795,252 817,246 841,236 865,232 885,221 910,211 930,228 952,238 976,256 1000,266 1020,282 1043,290 1065,295 1088,292 1177,287 1201,281 1225,277 1245,266 1270,255 1290,214 1312,192 1335,158 1362,149 1380,122 1405,124 1425,121 1447,123'],
    [887, 27, 3, '46,991 115,1000 135,955 160,910 180,790 202,645 225,530 248,425 270,347 293,312 316,275 338,243 361,209 382,175 405,137 428,118 451,103 496,103 520,127 540,139 565,175 588,170 610,189 630,176 652,160 675,146 720,127 742,130 788,142 832,148 858,148 880,154 900,169 945,181 967,184 990,184 1013,179 1037,184 1060,174 1081,139 1102,117 1126,95 1147,86 1192,74 1215,67 1237,64 1282,64 1305,61 1350,61 1372,66 1395,74 1418,91 1440,112 1466,112']
  ],
  'line-mid': [
    [-13, 187, 3, '38,322 66,343 90,358 112,373 134,387 157,406 180,426 202,448 225,466 250,488 270,511 293,531 316,550 338,561 360,569 382,574 405,574 430,571 451,565 473,570 496,571 517,575 540,585 562,594 586,601 607,601 630,603 652,601 697,601 742,596 787,592 832,596 850,599 878,613 900,625 922,622 945,629 990,628 1035,625 1057,622 1103,622 1148,626 1192,629 1215,631 1237,636 1260,649 1282,657 1305,664'],
    [427, 317, 3, '0,280 31,293 53,298 75,307 120,319 165,334 210,355 255,377 301,395 323,401 370,401 390,395 457,389 502,377 570,365 592,361 637,357 705,338 772,334 795,343 841,361 862,366 885,377 930,400 976,415 1020,430 1065,436 1132,436 1222,430 1245,421 1270,415 1290,398 1312,386 1335,364 1362,343'],
    [887, 27, 3, '0,1199 22,1193 46,1181 90,1159 115,1153 135,1133 160,1114 180,1087 202,1052 225,1012 248,971 270,929 293,899 316,864 338,829 382,769 428,712 451,686 472,655 496,614 520,577 540,536 565,491 588,453 610,422 630,404 675,386 702,382 742,363 765,353 811,341 832,338 855,328 880,322 900,314 922,311 945,304 967,304 990,307 1013,304 1037,307 1060,304 1081,298 1102,290 1126,283 1147,281 1192,269 1215,260 1237,251 1282,237 1305,232 1350,217 1395,202 1440,185 1466,181']
  ],
  'line-lower': [
    [-13, 187, 3, '40,580 66,602 90,618 112,633 134,650 157,686 179,708 202,730 225,739 250,745 270,742 293,737 316,721 338,716 360,712 405,709 428,717 451,731 473,739 496,740 517,744 540,754 562,762 586,769 607,772 652,772 697,769 720,764 742,761 787,755 832,755 856,757 880,734 900,682 922,679 945,677 967,679 1013,674 1035,667 1057,661 1125,661 1192,666 1215,677 1240,689 1260,739 1282,761 1305,777'],
    [427, 317, 3, '0,400 31,416 53,430 75,440 97,453 120,463 142,471 165,475 187,487 210,506 232,511 260,511 278,507 301,502 323,491 345,485 370,488 462,488 480,496 525,496 547,491 570,490 616,485 637,475 660,450 682,437 705,419 727,412 750,395 775,397 795,433 817,455 841,487 862,501 885,535 907,565 930,572 952,577 1000,580 1020,577 1110,577 1132,580 1177,580 1201,583 1225,583 1245,577 1270,574 1290,583 1312,580 1335,574 1357,546'],
    [887, 27, 3, '0,1409 22,1391 46,1373 67,1355 90,1326 115,1303 135,1312 160,1321 180,1384 205,1457 225,1492 250,1516 270,1511 293,1486 338,1415 361,1393 405,1342 428,1309 451,1270 472,1200 496,1123 520,1022 540,935 565,802 588,741 610,652 630,632 652,632 675,629 702,628 720,622 742,599 765,573 811,532 832,527 880,493 900,455 922,447 945,431 967,425 990,428 1013,433 1037,427 1060,436 1081,454 1102,465 1126,472 1147,472 1192,464 1215,451 1237,440 1260,425 1282,411 1305,401 1350,373 1372,352 1395,331 1418,298 1440,253 1466,253']
  ]
};

const oscillators = [
  ['line-mid', // K
    [-13, 557, 2.24, '30,187 48,181 65,166 82,160 102,160 117,170 151,163 185,157 205,164 235,166 253,158 272,137 300,122 320,109 337,109 355,131 388,152 404,166 422,169 440,175 490,175 507,162 540,139 573,131 607,121 625,118 656,143 691,148 725,169 742,169 758,158 775,148 808,140 842,127 875,127 892,134 909,155 927,166 943,169 960,169 995,162 1045,158 1110,152 1145,168 1160,160 1195,140 1212,139 1245,112 1262,109 1279,112 1312,120 1330,119 1345,110 1380,115 1397,127 1412,125 1430,139 1447,145 1464,157 1498,160 1514,152'],
    [677, 557, 2.178, '0,166 18,162 34,167 84,172 117,179 132,168 165,149 181,134 197,127 214,115 262,100 295,97 327,108 378,118 411,121 427,118 459,116 476,137 508,151 541,154 557,137 573,128 590,116 622,109 639,103 655,109 688,118 753,130 786,143 802,134 834,121 867,103 900,106 932,116 948,124 981,137 997,152 1014,166 1030,172 1063,172 1079,166 1095,166 1111,155 1130,157 1145,142 1163,149 1177,146 1194,127 1243,109 1275,106 1292,115 1325,130 1357,144 1373,156 1406,163 1440,154 1456,142 1471,151 1488,149 1504,133 1520,127']],
  ['line-upper', // D
    [-13, 557, 2.24, '30,184 65,176 102,166 117,169 151,166 255,163 272,155 337,121 355,125 404,148 455,167 490,170 507,169 540,155 590,137 625,127 656,133 691,140 725,157 742,161 775,155 842,139 892,132 927,149 960,160 1045,160 1110,155 1145,160 1195,151 1212,148 1245,130 1279,118 1330,118 1362,115 1397,118 1430,130 1464,143 1498,152'],
    [677, 557, 2.178, '0,157 18,157 34,162 100,169 117,172 132,170 165,160 197,142 230,127 262,112 295,103 327,104 378,112 427,116 459,118 492,131 541,146 573,137 622,118 655,109 688,115 753,124 786,133 834,127 867,115 900,109 932,110 965,119 997,131 1014,145 1063,166 1095,166 1130,160 1145,155 1194,148 1227,127 1260,115 1292,113 1341,125 1373,140 1406,154 1440,154 1488,149 1504,142 1520,139']],
  ['line-lower', // J
    [-13, 557, 2.24, '30,190 40,185 65,155 82,143 100,144 117,172 134,160 151,163 168,154 185,149 205,165 235,167 253,154 272,112 290,98 320,72 337,82 355,148 370,162 388,180 404,202 422,202 455,197 472,187 490,178 507,155 540,109 555,103 573,106 590,100 607,102 625,100 640,130 656,163 675,163 691,161 725,202 742,185 758,162 775,133 790,128 808,124 842,106 858,115 875,116 892,130 909,182 927,205 943,199 960,185 977,165 995,163 1010,155 1045,155 1062,162 1078,148 1095,146 1110,139 1128,174 1145,184 1160,163 1195,112 1212,127 1228,93 1245,75 1262,78 1279,98 1295,109 1312,124 1330,119 1345,98 1362,112 1380,115 1397,142 1412,134 1430,160 1447,170 1464,187 1480,179 1498,175 1514,154 1530,168'],
    [677, 557, 2.178, '0,181 18,166 34,184 50,178 84,175 100,187 117,190 132,154 165,127 181,101 197,94 214,76 230,79 262,76 295,79 311,95 327,110 345,115 378,130 394,122 411,134 427,121 443,125 459,115 476,163 492,167 508,182 525,168 541,170 557,125 573,103 590,85 622,87 639,82 655,97 671,110 688,121 720,134 753,142 786,163 802,134 818,116 834,109 851,88 867,79 884,85 900,97 932,118 948,134 981,157 997,193 1014,211 1030,211 1046,199 1063,190 1079,167 1095,163 1111,139 1130,149 1145,119 1163,139 1177,133 1194,95 1227,91 1243,82 1260,82 1275,95 1292,118 1308,130 1325,142 1341,161 1357,168 1373,187 1406,184 1422,168 1440,157 1456,127 1471,150 1488,142 1504,110 1520,103']],
  ['line-mid', // DIF
    [-13, 557, 2.24, '30,627 100,627 117,640 134,646 151,649 190,650 215,652 235,650 253,643 272,631 287,623 303,607 337,562 355,573 385,576 404,587 425,594 455,599 490,595 507,589 525,583 573,575 607,567 640,559 708,559 758,563 775,560 842,556 892,557 925,563 943,580 960,587 995,592 1045,596 1075,599 1110,595 1128,596 1145,601 1195,596 1212,595 1228,583 1262,556 1312,546 1330,541 1345,532 1380,526 1412,523 1430,527 1464,533 1498,535 1514,532'],
    [677, 557, 2.178, '0,538 18,543 50,563 84,580 117,598 160,591 214,575 262,543 295,526 345,519 378,514 394,497 411,490 427,474 443,469 459,460 476,472 492,475 508,484 541,487 573,453 590,412 622,329 639,302 655,286 688,295 720,300 753,303 770,310 786,324 818,334 834,337 851,334 884,314 900,310 932,321 997,372 1014,390 1063,430 1111,450 1177,481 1210,460 1260,433 1275,430 1292,438 1341,456 1360,461 1373,468 1422,481 1456,484 1471,490 1488,493 1520,493']],
  ['line-upper', // DEA
    [-13, 557, 2.24, '30,590 48,598 102,614 134,628 185,640 215,643 250,643 270,640 303,631 320,622 340,608 355,601 388,592 480,595 525,592 573,583 640,571 708,565 758,563 808,562 842,559 925,559 960,568 1010,583 1078,589 1110,592 1145,595 1212,595 1245,589 1295,570 1330,562 1380,545 1430,536 1514,536'],
    [677, 557, 2.178, '0,535 34,541 67,554 84,556 117,573 140,579 214,580 246,575 278,565 295,554 360,533 394,523 443,499 476,487 508,484 541,487 573,475 606,447 655,377 688,346 720,328 737,321 770,317 834,325 857,328 916,319 965,327 997,340 1014,352 1030,361 1095,407 1130,424 1163,440 1177,448 1215,455 1243,451 1292,443 1341,449 1390,457 1406,463 1520,484']]
];

function drawLine(name, segments) {
  const points = segments.map(([left, top, scale, data]) => data.split(' ').map(p => {
    const [x, y] = p.split(',');
    return (left + x / scale).toFixed(1) + ',' + (top + y / 3).toFixed(1);
  }).join(' ')).join(' ');
  add(plot, 'polyline', { class: name, points });
}

function hline(parent, y, name, x1 = 0, x2 = '100%') {
  add(parent, 'line', { class: name, x1, x2, y1: y + 0.5, y2: y + 0.5 });
}

// Panes
[561, 632].forEach(y => {
  hline(plot, y, 'grid-line');
  hline(axis, y, 'grid-line');
});
[594, 604, 615].forEach(y => hline(plot, y, 'ref-line'));
hline(plot, 83, 'last-line');
add(plot, 'text', { class: 'watermark', x: 29, y: 538 }, 'BTC/USDT，1时');

// Candlesticks
let index = 0;
candles.forEach(({ top, rows }) => rows.split(' ').forEach(row => {
  const up = row[0] === 'R';
  const [high, bodyTop, bodyBottom, low] = row.slice(1).split(',').map(v => Math.round(top + v / 3));
  const x = Math.floor(2 + 7.5 * index++);
  const height = Math.max(2, bodyBottom - bodyTop);
  add(plot, 'line', { class: up ? 'wick-up' : 'wick-down', x1: x + 0.5, x2: x + 0.5, y1: high, y2: low });
  if (up) {
    add(plot, 'rect', { class: 'up', x: x - 3, y: bodyTop, width: 6, height });
  } else {
    add(plot, 'rect', { class: 'down', x: x - 2.5, y: bodyTop + 0.5, width: 5, height: height - 1 });
  }
}));

// MACD histogram, hollow while the value is rising
macd.forEach((value, i) => {
  const x = Math.floor(2 + 7.5 * i);
  const height = Math.max(1, Math.round(Math.abs(value) / 3) - 1);
  const hollow = i > 0 && value > macd[i - 1] && height > 1;
  add(plot, 'rect', {
    class: (value > 0 ? 'bar-up' : 'bar-down') + (hollow || i === 0 ? ' hollow' : ''),
    x: x - 2.5, y: value > 0 ? 735.5 - height : 736.5, width: 5, height
  });
});

for (const name in lines) drawLine(name, lines[name]);
oscillators.forEach(([name, ...segments]) => drawLine(name, segments));

// Marks
add(plot, 'text', { class: 'mark', x: 1197, y: 52 }, '76849.99');
add(plot, 'path', { class: 'line-mid', d: 'M1252 49.5h7m-3-2.500l3 2.500-3 2.500' });
add(plot, 'text', { class: 'mark', x: 664, y: 527 }, '66835.00');
add(plot, 'path', { class: 'line-mid', d: 'M719 524.5h7m-3-2.500l3 2.500-3 2.500' });
add(plot, 'text', { class: 'signal', x: 1151, y: 176 }, '超卖');
add(plot, 'text', { class: 'signal', x: -19, y: 396 }, '超卖');

// Price axis
function tick(y, label, name = '') {
  hline(axis, y, 'grid-line', 0, 6);
  add(axis, 'text', { x: 35, y: y + 4, 'text-anchor': 'middle', class: name }, label);
}

add(axis, 'line', { class: 'grid-line', x1: 0.5, x2: 0.5, y1: 0, y2: 779 });
add(axis, 'rect', { fill: '#1b4409', x: 0, y: 73, width: 70, height: 20 });
[42, 89, 137, 184, 232, 279, 326, 374, 421, 468, 516].forEach((y, i) => tick(y, (77 - i) + '000.00'));
tick(83, '76138.41', 'tag-text');
tick(587, '100.00');
tick(622, '0.00');
[647, 677, 706, 736, 766].forEach((y, i) => tick(y, (1500 - i * 500) + '.00'));

// Dates
hline(timeline, 0, 'grid-line');
for (let day = 2; day <= 10; day++) {
  add(timeline, 'text', { x: 152 + (day - 2) * 180, y: 15, 'text-anchor': 'middle' }, '11月 ' + day);
}
```
